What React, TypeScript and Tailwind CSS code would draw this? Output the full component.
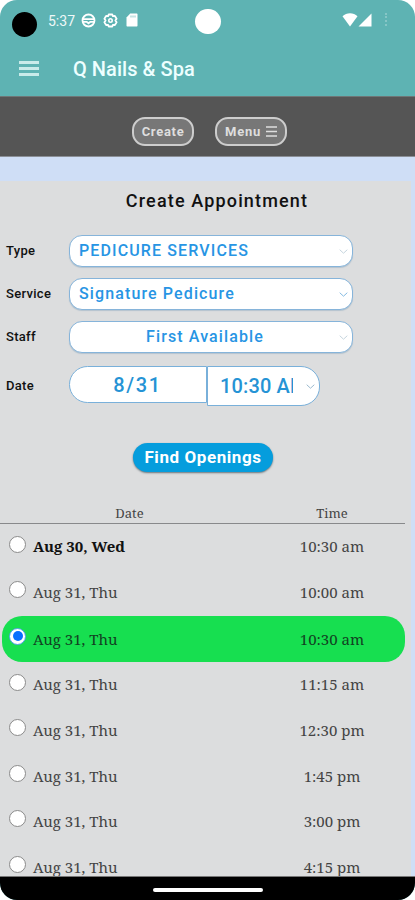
import clsx from 'clsx';

const slots = [
  { date: 'Aug 30, Wed', time: '10:30 am', firstOfDay: true },
  { date: 'Aug 31, Thu', time: '10:00 am' },
  { date: 'Aug 31, Thu', time: '10:30 am', selected: true },
  { date: 'Aug 31, Thu', time: '11:15 am' },
  { date: 'Aug 31, Thu', time: '12:30 pm' },
  { date: 'Aug 31, Thu', time: '1:45 pm' },
  { date: 'Aug 31, Thu', time: '3:00 pm' },
  { date: 'Aug 31, Thu', time: '4:15 pm' },
];

function Chevron({ className }: { className?: string }) {
  return (
    <svg className={clsx('h-[5px] w-[9px] shrink-0', className)} viewBox="0 0 9 5" fill="none" stroke="currentColor">
      <path d="M0.7 0.7L4.5 4.2L8.3 0.7" />
    </svg>
  );
}

function StatusBar() {
  return (
    <div className="flex h-[42px] items-start text-white">
      <div className="mt-[12px] ml-[12px] h-[25px] w-[25px] rounded-full bg-black" />
      <span className="mt-[11px] ml-[11px] w-[28px] text-[14px] leading-5 whitespace-nowrap opacity-90">5:37</span>
      <svg className="mt-[13px] ml-[5px] h-[15px] w-[15px]" viewBox="0 0 15 15" fill="none" stroke="currentColor" strokeWidth="1.8">
        <circle cx="7.5" cy="7.5" r="6" />
        <path d="M1.7 6.2h11.6M1.7 8.8h4l1.8 1.5 1.8-1.5h4" />
      </svg>
      <svg className="mt-[13px] ml-[7px] h-[15px] w-[15px]" viewBox="0 0 15 15" fill="none" stroke="currentColor">
        <path strokeWidth="1.8" strokeLinejoin="round" d="M5.7 1.5h3.6l.6 1.7 2-.2 1.7 2.7-1.2 1.8 1.2 1.8-1.7 2.7-2-.2-.6 1.7H5.7l-.6-1.7-2 .2-1.7-2.7 1.2-1.8-1.2-1.8L3.1 3l2 .2z" />
        <circle cx="7.5" cy="7.5" r="1.7" strokeWidth="1.6" />
      </svg>
      <svg className="mt-[13px] ml-[8px] h-[14px] w-[12px]" viewBox="0 0 12 14">
        <path fill="currentColor" d="M4.2 0.5h6.3c.6 0 1 .4 1 1v11c0 .6-.4 1-1 1h-9c-.6 0-1-.4-1-1v-8z" />
        <path stroke="#5eb3b3" strokeWidth="0.7" d="M5 2.5v2M7 2.5v2M9 2.5v2" />
      </svg>
      <div className="mt-[9px] ml-[57px] h-[25px] w-[26px] rounded-full bg-white" />
      <svg className="mt-[13px] ml-[121px] h-[14px] w-[16px]" viewBox="0 0 16 14" fill="currentColor">
        <path d="M0.5 3.2C4.5-.7 11.5-.7 15.5 3.2L8 13.5z" />
      </svg>
      <svg className="mt-[13px] h-[14px] w-[14px]" viewBox="0 0 14 14" fill="currentColor">
        <path d="M13.5 0.5v13H0.5z" />
      </svg>
      <div className="mt-[13px] ml-[13px] h-[13px] w-[2px] border-l-2 border-dotted border-white/25" />
    </div>
  );
}

function SelectRow({ label, value, centered, pale }: { label: string; value: string; centered?: boolean; pale?: boolean }) {
  return (
    <div className="flex h-[32px] items-center">
      <span className="w-[63px] text-[13px] font-medium tracking-[0.3px]">{label}</span>
      <div className="flex h-[32px] w-[284px] items-center rounded-[13px] border border-[#86b4da] bg-white pr-[4px] pl-[9px] shadow-[0_1px_1px_#b4c3cf]">
        <span className={clsx('flex-1 text-[16px] font-medium tracking-[1.12px] text-[#2795e4]', centered && 'pr-[8px] text-center')}>
          {value}
        </span>
        <Chevron className={pale ? 'text-[#c6d5de]' : 'text-[#85bbe2]'} />
      </div>
    </div>
  );
}

export default function App() {
  return (
    <div className="h-[900px] w-[415px] bg-white font-['Roboto',sans-serif]">
      <div className="flex h-full flex-col overflow-hidden rounded-[17px] bg-[#5eb3b3]">
        <header className="h-[97px] shrink-0 border-b border-[#6e7777]">
          <StatusBar />
          <div className="flex h-[54px] items-center">
            <div className="mt-[-2px] ml-[19px] flex w-[20px] flex-col gap-[3px]">
              <div className="h-[3px] bg-[#c9ebea]" />
              <div className="h-[3px] bg-[#c9ebea]" />
              <div className="h-[3px] bg-[#c9ebea]" />
            </div>
            <h1 className="ml-[34px] text-[20px] font-medium tracking-[0.05px] text-[#edffff]">Q Nails &amp; Spa</h1>
          </div>
        </header>

        <nav className="flex h-[60px] shrink-0 justify-center gap-[21px] border-b border-[#8b8f96] bg-[#555] pt-[20px] pl-[4px] text-[13px] font-bold tracking-[0.7px] text-[#dedede]">
          <button className="h-[29px] w-[62px] rounded-[13px] border-2 border-[#cdcdcd] bg-[#777]">Create</button>
          <button className="flex h-[29px] w-[72px] items-center justify-center gap-[5px] rounded-[13px] border-2 border-[#cdcdcd] bg-[#777]">
            Menu
            <svg className="h-[11px] w-[11px]" viewBox="0 0 11 11" stroke="currentColor" strokeWidth="1.3">
              <path d="M0 1h11M0 5.5h11M0 10h11" />
            </svg>
          </button>
        </nav>

        <main className="min-h-0 flex-1 overflow-hidden bg-[#cfdef6] pt-[24px]">
          <div className="h-full w-[411px] bg-[#dcddde]">
            <h2 className="pt-[6px] pl-[23px] text-center text-[18px] leading-7 font-medium tracking-[1.15px] text-[#111]">
              Create Appointment
            </h2>

            <div className="flex flex-col gap-[11px] pt-[20px] pl-[6px] text-[#111]">
              <SelectRow label="Type" value="PEDICURE SERVICES" pale />
              <SelectRow label="Service" value="Signature Pedicure" />
              <SelectRow label="Staff" value="First Available" centered pale />
              <div className="mt-[2px] flex h-[40px] items-start text-[20px] font-medium text-[#2593d5]">
                <span className="mt-[10px] w-[63px] text-[13px] leading-5 tracking-[0.3px] text-[#111]">Date</span>
                <div className="flex h-[37px] w-[138px] items-center justify-center rounded-l-[19px] border border-[#79b0da] bg-white pr-[1px] tracking-[1.7px]">
                  8/31
                </div>
                <div className="flex h-[40px] w-[113px] items-center rounded-r-[19px] border border-[#79b0da] bg-white pl-[12px]">
                  <span className="w-[73px] overflow-hidden tracking-[0.15px] whitespace-nowrap">10:30 AM</span>
                  <Chevron className="ml-[13px] text-[#9bb9cd]" />
                </div>
              </div>
            </div>

            <div className="pt-[37px] pl-[133px]">
              <button className="h-[29px] w-[140px] rounded-full bg-[#059ddd] text-[17px] leading-none font-bold tracking-[0.58px] text-white shadow-[0_1px_2px_#66747c]">
                Find Openings
              </button>
            </div>

            <div className="font-['Noto_Serif','DejaVu_Serif_Condensed','DejaVu_Serif',serif] text-[15px] text-[#444] [font-stretch:condensed]">
              <div className="mt-[31px] flex h-[21px] w-[405px] border-b border-[#88898b] text-center text-[13px] leading-[20px]">
                <span className="w-[259px]">Date</span>
                <span className="w-[146px]">Time</span>
              </div>
              {slots.map((slot, i) => (
                <div
                  key={i}
                  className={clsx(
                    'flex items-center',
                    slot.selected
                      ? 'mt-[0.6px] ml-[2px] h-[46px] w-[403px] rounded-[20px] bg-[#17df50] pl-[7px] text-[#124222]'
                      : 'h-[45.6px] w-[405px] pl-[9px]',
                  )}
                >
                  <div
                    className={clsx(
                      'mb-[5px] flex h-[17px] w-[17px] shrink-0 items-center justify-center rounded-full border bg-white',
                      slot.selected ? 'border-[#4d9fe5]' : 'border-[#8b8b8b]',
                    )}
                  >
                    {slot.selected && <div className="h-[10px] w-[10px] rounded-full bg-[#086fff]" />}
                  </div>
                  <span className={clsx('ml-[7px] w-[226px]', slot.firstOfDay && '-mt-px font-bold text-[#111]')}>{slot.date}</span>
                  <span className={clsx('w-[146px] text-center', slot.firstOfDay && '-mt-px')}>{slot.time}</span>
                </div>
              ))}
            </div>
          </div>
        </main>

        <footer className="flex h-[24px] shrink-0 justify-center border-t border-[#777] bg-black pt-[11px]">
          <div className="h-[4px] w-[110px] rounded-full bg-white" />
        </footer>
      </div>
    </div>
  );
}
